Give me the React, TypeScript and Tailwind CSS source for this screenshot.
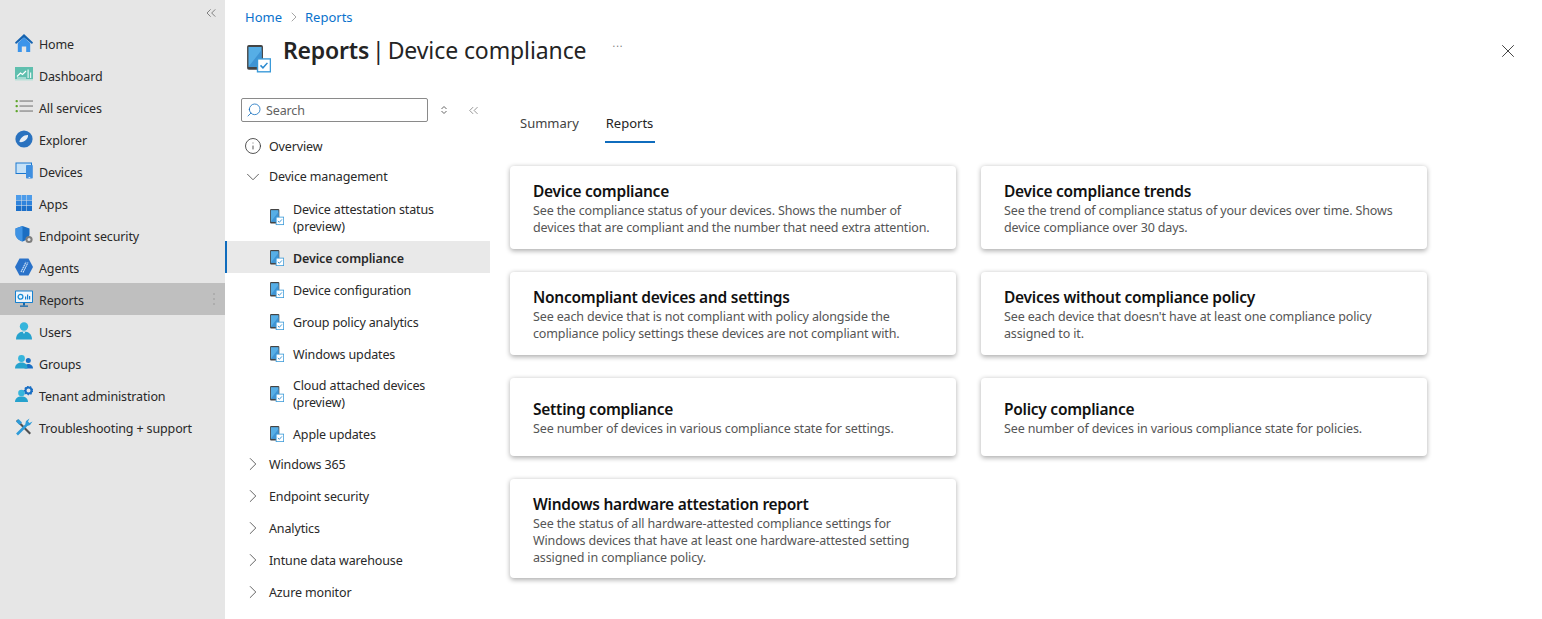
import { ChevronDown, ChevronRight, ChevronsLeft, Info, Search, X } from 'lucide-react';

const FONT = '[font-family:"Noto_Sans","Liberation_Sans",sans-serif]';

function HomeIcon() {
  return (
    <svg width="18" height="18" viewBox="0 0 18 18">
      <path d="M9 0 0 8.600l1 1.400L9 3.400l8 6.600 1-1.400z" fill="#1462b0" />
      <path d="M2.800 9 9 3.600 15.200 9v9h-4v-5.500H6.800V18h-4z" fill="#3b94ea" />
    </svg>
  );
}

function DashboardIcon() {
  return (
    <svg width="18" height="18" viewBox="0 0 18 18">
      <rect x="0" y="1" width="18" height="13" fill="#5fbfae" />
      <rect x="0" y="13" width="18" height="1.500" fill="#b7e0d8" />
      <path d="M2 10.500 5.500 7l2 1.500L11 5" stroke="#fff" strokeWidth="1.200" fill="none" />
      <path d="M2 12h9" stroke="#e4f5f2" strokeWidth="1" />
      <rect x="12.500" y="3.500" width="1.200" height="8.500" fill="#e4f5f2" />
      <rect x="15" y="6.500" width="1.200" height="5.500" fill="#e4f5f2" />
    </svg>
  );
}

function ListIcon() {
  return (
    <svg width="18" height="18" viewBox="0 0 18 18">
      <rect x="0.500" y="2" width="2.400" height="2.200" rx="1" fill="#5ea52b" />
      <rect x="0.500" y="7" width="2.400" height="2.200" rx="1" fill="#5ea52b" />
      <rect x="0.500" y="12" width="2.400" height="2.200" rx="1" fill="#5ea52b" />
      <rect x="4.500" y="2.400" width="13.500" height="1.300" fill="#8a8a8a" />
      <rect x="4.500" y="7.400" width="13.500" height="1.300" fill="#8a8a8a" />
      <rect x="4.500" y="12.400" width="13.500" height="1.300" fill="#8a8a8a" />
    </svg>
  );
}

function ExplorerIcon() {
  return (
    <svg width="18" height="18" viewBox="0 0 18 18">
      <circle cx="9" cy="9" r="8.600" fill="#2a72bf" />
      <path d="M4.400 12C4.800 8.400 8.600 4.800 13 5c.6 3.600-4 8-8.600 7z" fill="#e8eef5" />
    </svg>
  );
}

function DevicesIcon() {
  return (
    <svg width="18" height="18" viewBox="0 0 18 18">
      <rect x="0.500" y="0.500" width="16.500" height="11.500" fill="#1b78d0" />
      <rect x="1.500" y="1.500" width="14.500" height="9.500" fill="#c5e1f7" />
      <rect x="11" y="3" width="6.800" height="13.500" rx="0.800" fill="#3f8fe0" />
      <rect x="13.600" y="15" width="1.600" height="1" fill="#d5e8f8" />
    </svg>
  );
}

function AppsIcon() {
  const cells = [0, 1, 2].flatMap((r) => [0, 1, 2].map((c) => ({ r, c })));
  return (
    <svg width="18" height="18" viewBox="0 0 18 18">
      {cells.map(({ r, c }) => (
        <rect key={`${r}${c}`} x={1 + c * 5.500} y={1 + r * 5.500} width="5" height="5" fill={r === 0 ? '#4d9cea' : r === 1 ? '#2f83dc' : '#1b6fc9'} />
      ))}
    </svg>
  );
}

function ShieldIcon() {
  return (
    <svg width="18" height="18" viewBox="0 0 18 18">
      <path d="M7.500 0 14.500 2.500v5.500c0 3.600-3 6-7 7.500C3.500 14 .5 11.600.5 8V2.500z" fill="#1b6ec2" />
      <path d="M7.500 0v15.500C3.500 14 .5 11.600.5 8V2.500z" fill="#3f93e4" />
      <circle cx="14" cy="13.500" r="3.600" fill="#7d7d7d" />
      <circle cx="14" cy="13.500" r="1.500" fill="#e6e6e6" />
    </svg>
  );
}

function AgentsIcon() {
  return (
    <svg width="18" height="18" viewBox="0 0 18 18">
      <path d="M4.500 .5h9L18 9l-4.500 8.500h-9L0 9z" fill="#2a72c9" />
      <path d="M6 14 11 4M8 14.500l5-10" stroke="#d6e8fa" strokeWidth="1.100" strokeDasharray="1.600 .5" />
    </svg>
  );
}

function ReportsIcon() {
  return (
    <svg width="18" height="18" viewBox="0 0 18 18">
      <rect x="0" y="0.500" width="18" height="12.500" rx="0.800" fill="#1580d0" />
      <rect x="1" y="1.500" width="16" height="10.500" fill="#eef6fc" />
      <circle cx="5.500" cy="6.800" r="2.400" fill="none" stroke="#1a8fd8" strokeWidth="1.300" />
      <rect x="10" y="6.500" width="1.200" height="3" fill="#1580d0" />
      <rect x="12" y="4.500" width="1.200" height="5" fill="#1580d0" />
      <rect x="14" y="6" width="1.200" height="3.500" fill="#1580d0" />
      <rect x="8" y="13" width="2" height="2.500" fill="#1368ab" />
      <rect x="5" y="15.500" width="8" height="1.300" fill="#1368ab" />
    </svg>
  );
}

function UserIcon() {
  return (
    <svg width="18" height="18" viewBox="0 0 18 18">
      <circle cx="9" cy="4.500" r="4.200" fill="#36b5dc" />
      <path d="M1 17.500c0-5 3-8 8-8s8 3 8 8z" fill="#26a2cd" />
      <path d="M7.700 9.700h2.600L9 12z" fill="#e6f6fb" />
    </svg>
  );
}

function GroupsIcon() {
  return (
    <svg width="18" height="18" viewBox="0 0 18 18">
      <circle cx="13.300" cy="6.500" r="2.500" fill="#1a6fc4" />
      <path d="M9.500 14.500c0-2.800 1.500-4.500 3.800-4.500s4.700 1.700 4.700 4.500z" fill="#1a6fc4" />
      <circle cx="6.500" cy="4.500" r="3.400" fill="#36b5dc" />
      <path d="M0 14.500c0-3.500 2.500-6 6.500-6s6 2.500 6 6z" fill="#26a2cd" />
    </svg>
  );
}

function TenantIcon() {
  return (
    <svg width="18" height="18" viewBox="0 0 18 18">
      <circle cx="6.500" cy="7" r="3.300" fill="#36b5dc" />
      <path d="M0 16c0-3.500 2.500-5.500 6.500-5.500S13 12.500 13 16z" fill="#26a2cd" />
      <circle cx="13.500" cy="4.500" r="3" fill="none" stroke="#1a6fc4" strokeWidth="2" />
      <circle cx="13.500" cy="4.500" r="4.100" fill="none" stroke="#1a6fc4" strokeWidth="1.300" strokeDasharray="1.500 1.400" />
    </svg>
  );
}

function ToolsIcon() {
  return (
    <svg width="18" height="18" viewBox="0 0 18 18">
      <path d="M2.500 1.500 16 15l-1.500 1.500L1 3z" fill="#2b2b2b" opacity="0.800" />
      <path d="M2 16.500l9-9" stroke="#2f9bd8" strokeWidth="2.600" />
      <path d="M10 7.500 11 3l3.500-2.500-1.500 3 1.500 1.500 3-1.500L15 7l-4 1.500z" fill="#2f9bd8" />
      <path d="M1 3.500 3.500 1 7 4.500 4.500 7z" fill="#2f9bd8" />
    </svg>
  );
}

function PhoneCheck({ size }: { size: number }) {
  return (
    <svg width={size} height={size * 1.200} viewBox="0 0 24 29">
      <rect x="0" y="0" width="16" height="25" rx="1.800" fill="#444" />
      <rect x="1.400" y="2" width="13.200" height="20" fill="#56aee6" />
      <path d="M1.400 22 14.600 5v17z" fill="#3f94d4" />
      <rect x="10.500" y="14" width="13" height="13" fill="#fff" stroke="#3a9ad9" strokeWidth="1.400" />
      <path d="M13.500 20.500l2.500 2.500 4.500-5" stroke="#2a8ad0" strokeWidth="1.500" fill="none" />
    </svg>
  );
}

const mainNav = [
  { label: 'Home', icon: <HomeIcon /> },
  { label: 'Dashboard', icon: <DashboardIcon /> },
  { label: 'All services', icon: <ListIcon /> },
  { label: 'Explorer', icon: <ExplorerIcon /> },
  { label: 'Devices', icon: <DevicesIcon /> },
  { label: 'Apps', icon: <AppsIcon /> },
  { label: 'Endpoint security', icon: <ShieldIcon /> },
  { label: 'Agents', icon: <AgentsIcon /> },
  { label: 'Reports', icon: <ReportsIcon />, active: true },
  { label: 'Users', icon: <UserIcon /> },
  { label: 'Groups', icon: <GroupsIcon /> },
  { label: 'Tenant administration', icon: <TenantIcon /> },
  { label: 'Troubleshooting + support', icon: <ToolsIcon /> },
];

const subItems = [
  { label: ['Device attestation status', '(preview)'], h: 'h-[49px]' },
  { label: ['Device compliance'], h: 'h-8', active: true },
  { label: ['Device configuration'], h: 'h-8' },
  { label: ['Group policy analytics'], h: 'h-8' },
  { label: ['Windows updates'], h: 'h-8' },
  { label: ['Cloud attached devices', '(preview)'], h: 'h-[48px]' },
  { label: ['Apple updates'], h: 'h-8' },
];

const collapsed = ['Windows 365', 'Endpoint security', 'Analytics', 'Intune data warehouse', 'Azure monitor'];

const cards = [
  { title: 'Device compliance', box: 'h-[83px] pt-[1px]', lines: ['See the compliance status of your devices. Shows the number of', 'devices that are compliant and the number that need extra attention.'] },
  { title: 'Device compliance trends', box: 'h-[83px] pt-[1px]', lines: ['See the trend of compliance status of your devices over time. Shows', 'device compliance over 30 days.'] },
  { title: 'Noncompliant devices and settings', box: 'h-[83px] pt-[1px]', lines: ['See each device that is not compliant with policy alongside the', 'compliance policy settings these devices are not compliant with.'] },
  { title: 'Devices without compliance policy', box: 'h-[83px] pt-[1px]', lines: ["See each device that doesn't have at least one compliance policy", 'assigned to it.'] },
  { title: 'Setting compliance', box: 'h-[78px] pt-[1px]', lines: ['See number of devices in various compliance state for settings.'] },
  { title: 'Policy compliance', box: 'h-[78px] pt-[1px]', lines: ['See number of devices in various compliance state for policies.'] },
  { title: 'Windows hardware attestation report', box: 'h-[99px] pt-[3px]', lines: ['See the status of all hardware-attested compliance settings for', 'Windows devices that have at least one hardware-attested setting', 'assigned in compliance policy.'] },
];

export default function App() {
  return (
    <div className={`${FONT} flex h-screen overflow-hidden bg-white text-[12.5px] leading-[17px] tracking-[-0.14px] text-[#292929]`}>
      {/* Left nav */}
      <aside className="w-[225px] shrink-0 bg-[#e6e6e6]">
        <div className="flex h-[27px] items-start justify-end pr-[6px] pt-[5px]">
          <ChevronsLeft size={16} strokeWidth={1.200} className="text-[#666]" />
        </div>
        {mainNav.map((item) => (
          <div key={item.label} className={`relative flex h-8 items-center gap-[6px] pl-[15px] ${item.active ? 'bg-[#bfbfbf]' : ''}`}>
            <span className="flex w-[18px] shrink-0">{item.icon}</span>
            <span className="mt-[2px] whitespace-nowrap">{item.label}</span>
            {item.active && (
              <span className="absolute right-[10px] top-[10px] flex flex-col gap-[3px]">
                <span className="h-[2px] w-[2px] bg-[#adadad]" />
                <span className="h-[2px] w-[2px] bg-[#adadad]" />
                <span className="h-[2px] w-[2px] bg-[#adadad]" />
              </span>
            )}
          </div>
        ))}
      </aside>

      <main className="flex min-w-0 flex-1 flex-col">
        {/* Header */}
        <header className="h-[98px] shrink-0">
          <div className="flex h-[34px] items-center pl-[20px] text-[13px] tracking-normal text-[#0a72cc]">
            <span>Home</span>
            <ChevronRight size={16} strokeWidth={1} className="mx-[3.500px] text-[#777]" />
            <span>Reports</span>
          </div>
          <div className="flex items-start pl-[22px] pr-[23px]">
            <div className="mt-[11px] w-[36px] shrink-0">
              <PhoneCheck size={24} />
            </div>
            <h1 className="flex whitespace-nowrap text-[23px] leading-[32px] tracking-[-0.1px] text-[#242424]">
              <span className="font-semibold tracking-[-0.2px]">Reports</span>
              <span className="ml-[3px] mr-[3px]">|</span>
              <span>Device compliance</span>
            </h1>
            <span className="ml-[26px] mt-[2px] text-[10px] leading-[14px] tracking-[1px] text-[#777]">...</span>
            <X size={22} strokeWidth={1} className="ml-auto mt-[6px] text-[#333]" />
          </div>
        </header>

        <div className="flex min-h-0 flex-1">
          {/* Report menu */}
          <nav className="w-[265px] shrink-0">
            <div className="flex items-center pl-[16px]">
              <div className="flex h-[24px] w-[187px] items-center gap-[5px] rounded-[2px] border border-[#8a8a8a] pl-[5px] text-[#616161]">
                <Search size={16} strokeWidth={1.200} className="-mx-[1px] -scale-x-100 text-[#0f6cbd]" />
                <span>Search</span>
              </div>
              <svg width="10" height="10" viewBox="0 0 10 10" className="ml-[11px]">
                <path d="M2.500 4 5 1.500 7.500 4M2.500 6 5 8.500 7.500 6" stroke="#666" fill="none" />
              </svg>
              <ChevronsLeft size={15} strokeWidth={1.100} className="ml-[17px] text-[#666]" />
            </div>
            <div className="mt-[8px] flex h-[32px] items-center gap-[8px] pl-[20px]">
              <Info size={18} strokeWidth={1.100} className="-m-[1px] text-[#333]" />
              <span className="mt-[1px]">Overview</span>
            </div>
            <div className="flex h-[30px] items-center gap-[8px] pl-[20px]">
              <ChevronDown size={22} strokeWidth={0.900} className="-m-[3px] text-[#444]" />
              <span className="-mt-[2px]">Device management</span>
            </div>
            {subItems.map((item) => (
              <div
                key={item.label[0]}
                className={`flex items-center ${item.h} ${item.active ? 'border-l-2 border-[#0f6cbd] bg-[#e9e9e9] pl-[43px] font-semibold' : 'pl-[45px]'}`}
              >
                <span className="mt-[2px] flex w-[23px] shrink-0">
                  <PhoneCheck size={14} />
                </span>
                <span className="mt-[2px]">
                  {item.label.map((line) => (
                    <span key={line} className="block whitespace-nowrap">{line}</span>
                  ))}
                </span>
              </div>
            ))}
            <div className="mt-[-1px]">
              {collapsed.map((label) => (
                <div key={label} className="flex h-8 items-center gap-[8px] pl-[20px]">
                  <ChevronRight size={22} strokeWidth={0.900} className="-m-[3px] text-[#444]" />
                  <span>{label}</span>
                </div>
              ))}
            </div>
          </nav>

          {/* Content */}
          <section className="min-w-0 flex-1 pl-[20px]">
            <div className="flex h-[47px] items-start gap-[27px] pl-[10px] pt-[17px] text-[13px] tracking-normal">
              <span className="text-[#424242]">Summary</span>
              <span className="relative text-[#242424]">
                Reports
                <span className="absolute -bottom-[11px] -left-[1px] -right-[2px] h-[2px] bg-[#0f6cbd]" />
              </span>
            </div>
            <div className="mt-[21px] grid w-[917px] grid-cols-[446px_446px] items-start gap-x-[25px] gap-y-[23px]">
              {cards.map((card) => (
                <div
                  key={card.title}
                  className={`flex ${card.box} flex-col justify-center rounded-[4px] bg-white pl-[23px] shadow-[0_1.5px_5px_rgba(0,0,0,0.32)]`}
                >
                  <div className="mb-[1px] text-[15.5px] font-semibold leading-[20px] tracking-[-0.26px] text-[#111]">{card.title}</div>
                  {card.lines.map((line) => (
                    <div key={line} className="whitespace-nowrap text-[#555]">{line}</div>
                  ))}
                </div>
              ))}
            </div>
          </section>
        </div>
      </main>
    </div>
  );
}
